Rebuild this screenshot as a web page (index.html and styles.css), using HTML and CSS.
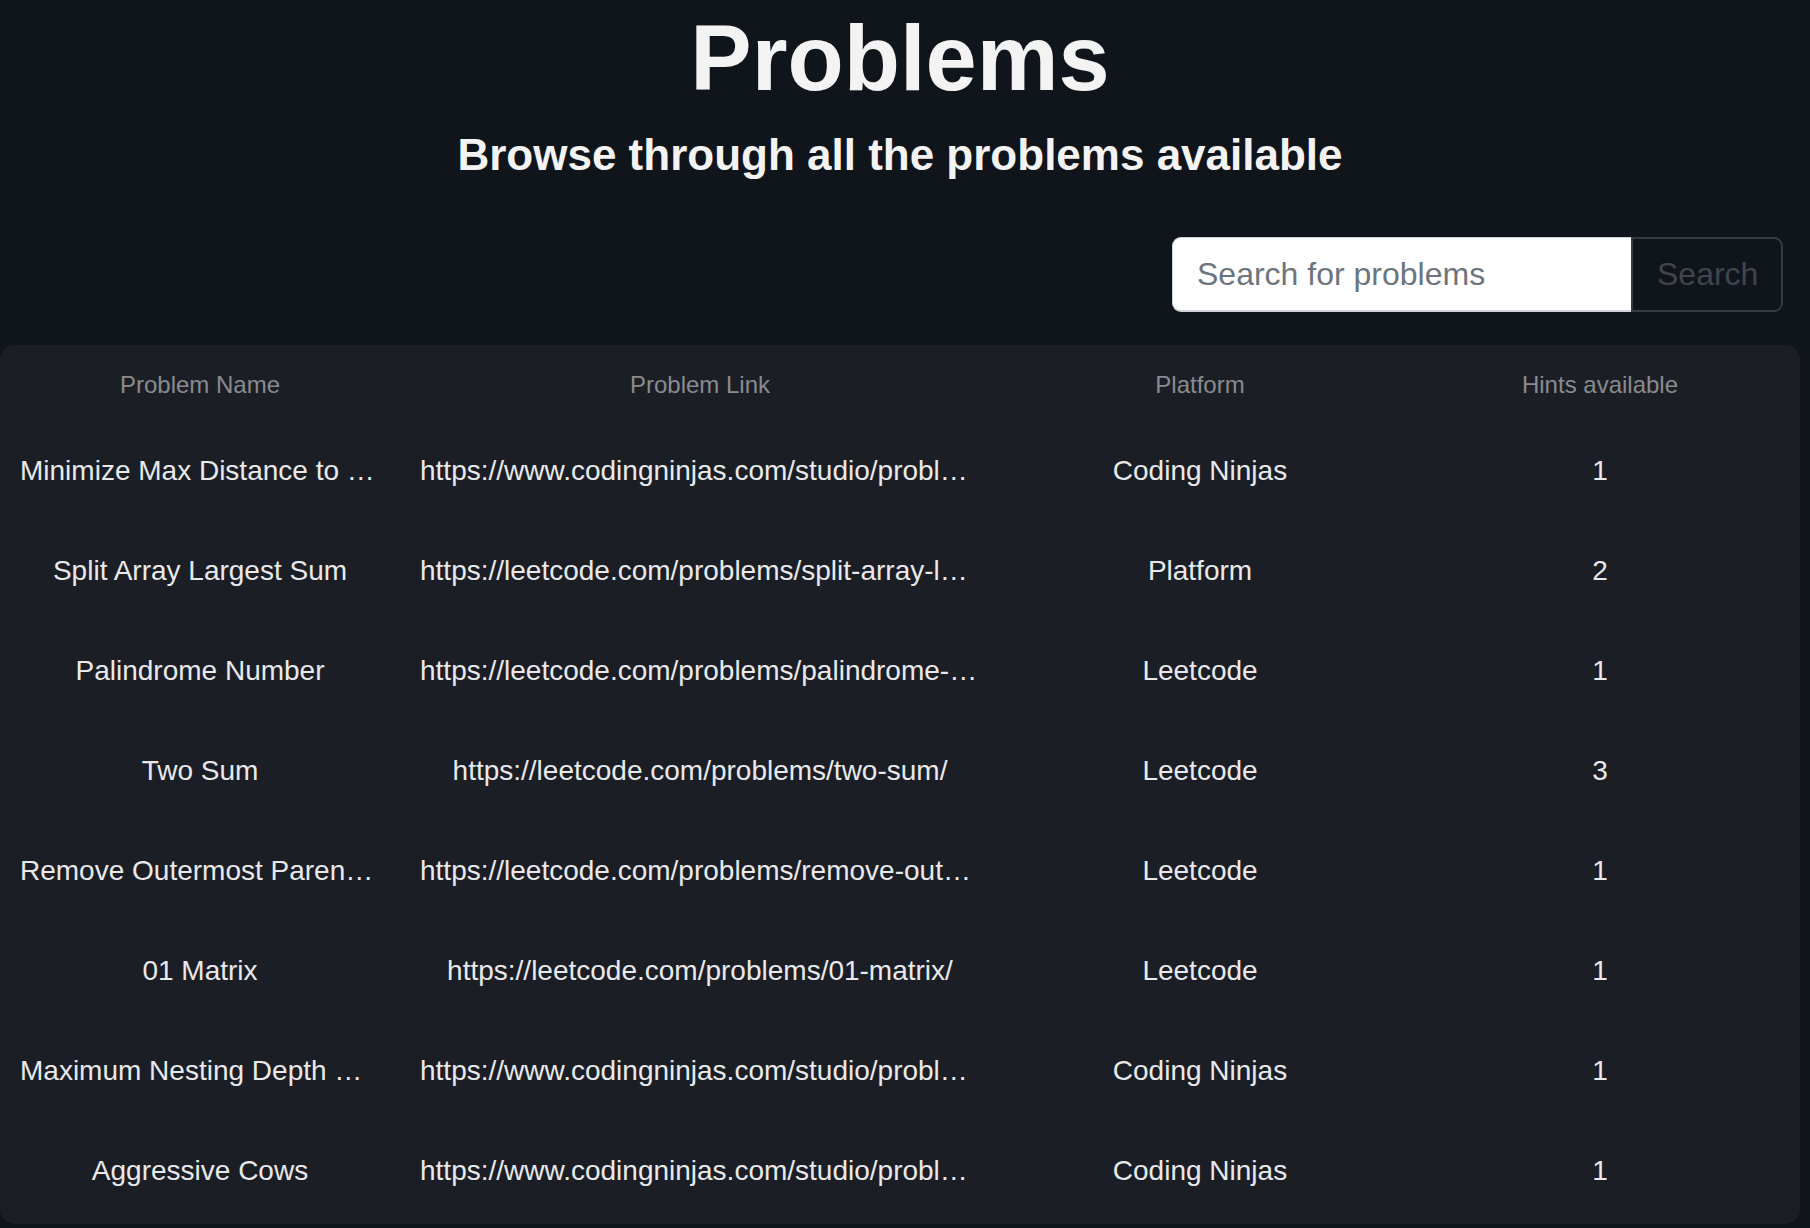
FILE: index.html
```html
<!DOCTYPE html>
<html lang="en">
<head>
<meta charset="utf-8">
<title>Problems</title>
<link rel="stylesheet" href="styles.css">
</head>
<body>
<main class="page">
  <header class="hero">
    <h1 class="title">Problems</h1>
    <h2 class="subtitle">Browse through all the problems available</h2>
  </header>
  <form class="search" onsubmit="return false">
    <input class="search-input" type="text" placeholder="Search for problems">
    <button class="search-btn" type="submit">Search</button>
  </form>
  <section class="table">
    <div class="row head">
      <div class="cell">Problem Name</div>
      <div class="cell">Problem Link</div>
      <div class="cell">Platform</div>
      <div class="cell">Hints available</div>
    </div>
    <div class="row">
      <div class="cell">Minimize Max Distance to Gas Station</div>
      <div class="cell">https://www.codingninjas.com/studio/problems/minimize-max-distance-to-gas-station</div>
      <div class="cell">Coding Ninjas</div>
      <div class="cell">1</div>
    </div>
    <div class="row">
      <div class="cell">Split Array Largest Sum</div>
      <div class="cell">https://leetcode.com/problems/split-array-largest-sum/</div>
      <div class="cell">Platform</div>
      <div class="cell">2</div>
    </div>
    <div class="row">
      <div class="cell">Palindrome Number</div>
      <div class="cell">https://leetcode.com/problems/palindrome-number/</div>
      <div class="cell">Leetcode</div>
      <div class="cell">1</div>
    </div>
    <div class="row">
      <div class="cell">Two Sum</div>
      <div class="cell">https://leetcode.com/problems/two-sum/</div>
      <div class="cell">Leetcode</div>
      <div class="cell">3</div>
    </div>
    <div class="row">
      <div class="cell">Remove Outermost Parentheses</div>
      <div class="cell">https://leetcode.com/problems/remove-outermost-parentheses/</div>
      <div class="cell">Leetcode</div>
      <div class="cell">1</div>
    </div>
    <div class="row">
      <div class="cell">01 Matrix</div>
      <div class="cell">https://leetcode.com/problems/01-matrix/</div>
      <div class="cell">Leetcode</div>
      <div class="cell">1</div>
    </div>
    <div class="row">
      <div class="cell">Maximum Nesting Depth Of The Parentheses</div>
      <div class="cell">https://www.codingninjas.com/studio/problems/maximum-nesting-depth</div>
      <div class="cell">Coding Ninjas</div>
      <div class="cell">1</div>
    </div>
    <div class="row">
      <div class="cell">Aggressive Cows</div>
      <div class="cell">https://www.codingninjas.com/studio/problems/aggressive-cows</div>
      <div class="cell">Coding Ninjas</div>
      <div class="cell">1</div>
    </div>
  </section>
</main>
</body>
</html>
```

FILE: styles.css
```css
* { box-sizing: border-box; }

html, body {
  margin: 0;
  padding: 0;
  background: #10141b;
  font-family: "Liberation Sans", Arial, Helvetica, sans-serif;
  color: #f2f2f2;
  overflow: hidden;
}

.page {
  width: 1800px;
  display: flex;
  flex-direction: column;
}

.hero {
  display: flex;
  flex-direction: column;
  align-items: center;
}

.title {
  margin: 0;
  padding-top: 6px;
  font-size: 92px;
  line-height: 104px;
  font-weight: 700;
  color: #f3f3f3;
}

.subtitle {
  margin: 20px 0 0;
  font-size: 44px;
  line-height: 50px;
  font-weight: 700;
  color: #f3f3f3;
}

.search {
  display: flex;
  justify-content: flex-end;
  margin: 57px 17px 0 0;
  height: 75px;
}

.search-input {
  width: 459px;
  height: 75px;
  padding: 12px 24px;
  font-family: inherit;
  font-size: 32px;
  color: #212529;
  background: #ffffff;
  border: 1px solid #ced4da;
  border-bottom-width: 2px;
  border-right: none;
  border-radius: 9px 0 0 9px;
  outline: none;
}

.search-input::placeholder { color: #6c757d; }

.search-btn {
  width: 152px;
  height: 75px;
  padding: 12px 24px;
  font-family: inherit;
  font-size: 32px;
  color: #40454d;
  background: transparent;
  border: 2px solid #363a42;
  border-radius: 0 9px 9px 0;
}

.table {
  margin-top: 33px;
  background: #1b1e25;
  border-radius: 15px;
  padding-bottom: 3px;
}

.row {
  display: grid;
  grid-template-columns: 2fr 3fr 2fr 2fr;
  height: 100px;
  align-items: center;
}

.row.head {
  height: 76px;
}

.cell {
  padding: 0 20px;
  text-align: center;
  white-space: nowrap;
  overflow: hidden;
  text-overflow: ellipsis;
  font-size: 28px;
  line-height: 34px;
  color: #e9e9eb;
}

.row.head .cell {
  font-size: 24px;
  line-height: 28px;
  color: #8a8b8f;
  padding-top: 4px;
}
```
